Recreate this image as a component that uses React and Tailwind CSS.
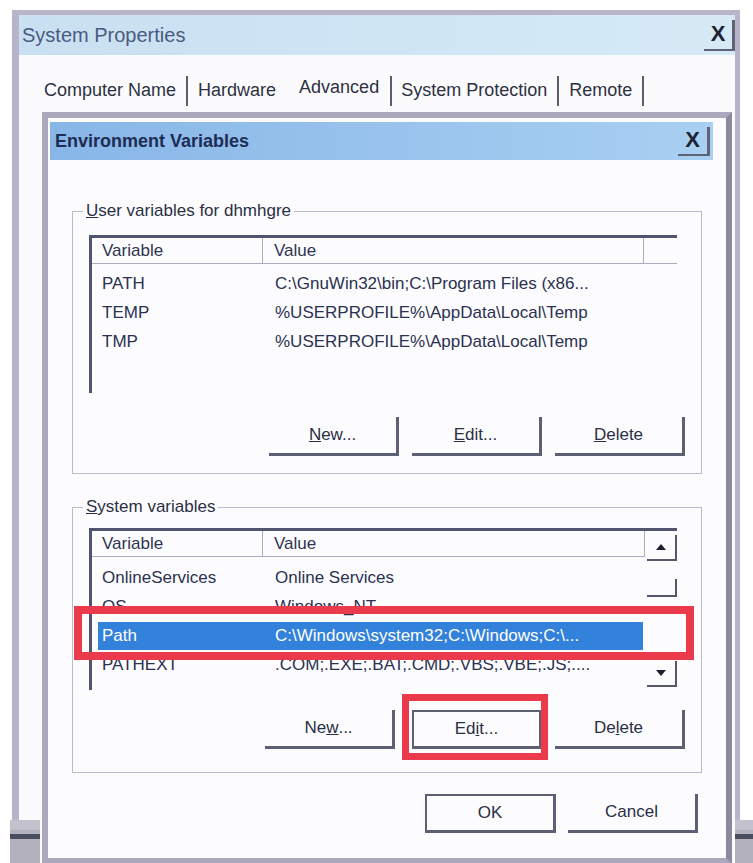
import React from 'react';

const userVars = [
  { name: 'PATH', value: 'C:\\GnuWin32\\bin;C:\\Program Files (x86...' },
  { name: 'TEMP', value: '%USERPROFILE%\\AppData\\Local\\Temp' },
  { name: 'TMP', value: '%USERPROFILE%\\AppData\\Local\\Temp' },
];

const systemVars = [
  { name: 'OnlineServices', value: 'Online Services' },
  { name: 'OS', value: 'Windows_NT' },
  { name: 'Path', value: 'C:\\Windows\\system32;C:\\Windows;C:\\...', selected: true },
  { name: 'PATHEXT', value: '.COM;.EXE;.BAT;.CMD;.VBS;.VBE;.JS;....' },
];

function CloseBox({ className = '' }) {
  return (
    <div
      className={`flex items-center justify-center border-r-[3px] border-b-[2px] border-[#5f6275] text-[22px] font-bold leading-none text-[#1f2233] ${className}`}
    >
      X
    </div>
  );
}

function Sep() {
  return <div className="h-[30px] w-[2px] bg-[#5a5d6c]" />;
}

function Btn({ children, outlined = false, className = '' }) {
  return (
    <div
      className={`flex h-[39px] w-[130px] items-center justify-center border-r-[3px] border-b-[3px] border-[#5d6074] text-[17px] text-[#2a2f45] ${
        outlined ? 'border-l-[2px] border-t-[2px]' : ''
      } ${className}`}
    >
      {children}
    </div>
  );
}

function Header() {
  return (
    <div className="flex h-[26px] items-center border-b border-[#a9acbc] text-[17px] text-[#2f3550]">
      <div className="w-[171px] border-r border-[#a9acbc] pl-[10px] leading-[26px]">Variable</div>
      <div className="flex-1 pl-[11px] leading-[26px]">Value</div>
    </div>
  );
}

function Row({ v }) {
  return (
    <div className="flex h-[29px] items-center text-[17px]">
      <div
        className={`ml-[6px] mr-[2px] flex h-[28px] flex-1 items-center ${
          v.selected ? 'bg-[#3281db] text-white' : 'text-[#2b3150]'
        }`}
      >
        <div className="w-[165px] pl-[4px]">{v.name}</div>
        <div className="pl-[12px] whitespace-nowrap">{v.value}</div>
      </div>
    </div>
  );
}

function ScrollArrow({ up }) {
  return (
    <div className="flex h-[26px] w-[30px] items-center justify-center border-r-[2px] border-b-[2px] border-[#55586b]">
      <svg width="12" height="8" viewBox="0 0 12 8">
        {up ? <path d="M1 7 L6 1 L11 7 Z" fill="#1d2030" /> : <path d="M1 1 L6 7 L11 1 Z" fill="#1d2030" />}
      </svg>
    </div>
  );
}

export default function App() {
  return (
    <div className="relative h-[863px] w-[753px] overflow-hidden bg-white font-['Liberation_Sans',Arial,sans-serif]">
      {/* System Properties window */}
      <div className="ml-[12px] mt-[10px] h-[880px] w-[728px] border-l-[7px] border-r-[5px] border-t-[5px] border-[#b8b4ca] bg-[#fbfbfd]">
        <div className="flex h-[40px] items-center justify-between bg-gradient-to-r from-[#c9e0f2] to-[#d6eaf6] pl-[3px]">
          <span className="text-[20px] text-[#4b5a80]">System Properties</span>
          <CloseBox className="h-[31px] w-[31px]" />
        </div>

        <div className="flex h-[57px] items-center pl-[25px] pt-[14px] text-[18px] text-[#2d3142]">
          <span>Computer Name</span>
          <div className="ml-[10px]"><Sep /></div>
          <span className="ml-[10px]">Hardware</span>
          <span className="mb-[6px] ml-[23px]">Advanced</span>
          <div className="ml-[11px]"><Sep /></div>
          <span className="ml-[9px]">System Protection</span>
          <div className="ml-[10px]"><Sep /></div>
          <span className="ml-[10px]">Remote</span>
          <div className="ml-[10px]"><Sep /></div>
        </div>

        {/* Environment Variables dialog */}
        <div className="ml-[23px] h-[752px] w-[690px] border-[6px] border-[#aba8bc] border-r-[#8c899e] bg-[#fcfcfe]">
          <div className="ml-[2px] mr-[13px] mt-[4px] flex h-[38px] items-center justify-between bg-gradient-to-r from-[#88b6e7] to-[#a9d0f2] pl-[5px] pr-[3px]">
            <span className="text-[18px] font-bold text-[#1d2d55]">Environment Variables</span>
            <CloseBox className="h-[29px] w-[32px]" />
          </div>

          {/* user variables */}
          <fieldset className="mx-[24px] mt-[40px] h-[274px] border border-[#b9bccb]">
            <legend className="ml-[10px] px-[3px] text-[17px] leading-[22px] text-[#2a2f45]">
              <span className="underline">U</span>ser variables for dhmhgre
            </legend>
            <div className="ml-[16px] mt-[13px] h-[158px] w-[588px] border-l-[3px] border-t-[3px] border-[#50546e]">
              <div className="flex">
                <div className="w-[551px]">
                  <Header />
                </div>
                <div className="h-[26px] flex-1 border-b border-l border-[#a9acbc]" />
              </div>
              <div className="mt-[5px]">
                {userVars.map((v) => (
                  <Row key={v.name} v={v} />
                ))}
              </div>
            </div>
            <div className="mt-[24px] flex justify-end gap-[13px] pr-[16px]">
              <Btn><span className="underline">N</span>ew...</Btn>
              <Btn><span className="underline">E</span>dit...</Btn>
              <Btn><span className="underline">D</span>elete</Btn>
            </div>
          </fieldset>

          {/* system variables */}
          <fieldset className="relative mx-[24px] mt-[22px] h-[277px] border border-[#b9bccb]">
            <legend className="ml-[10px] px-[3px] text-[17px] leading-[22px] text-[#2a2f45]">
              <span className="underline">S</span>ystem variables
            </legend>
            <div className="ml-[16px] mt-[10px] flex h-[162px] w-[588px] overflow-hidden border-l-[3px] border-t-[3px] border-[#50546e]">
              <div className="w-[553px]">
                <div className="border-r border-[#a9acbc]">
                  <Header />
                </div>
                <div className="mt-[6px]">
                  {systemVars.map((v) => (
                    <Row key={v.name} v={v} />
                  ))}
                </div>
              </div>
              <div className="flex flex-1 flex-col items-end pt-[4px]">
                <ScrollArrow up />
                <div className="mt-[18px] h-[18px] w-[30px] border-r-[2px] border-b-[2px] border-[#55586b]" />
                <div className="flex-1" />
                <ScrollArrow />
                <div className="h-[3px]" />
              </div>
            </div>
            <div className="mt-[20px] flex justify-end gap-[13px] pr-[16px]">
              <Btn>Ne<span className="underline">w</span>...</Btn>
              <Btn outlined className="ml-[4px] w-[124px]">Ed<span className="underline">i</span>t...</Btn>
              <Btn>De<span className="underline">l</span>ete</Btn>
            </div>

            {/* highlight marks */}
            <div className="absolute left-[1px] top-[88px] h-[54px] w-[620px] border-[8px] border-[#ea3a4c]" />
            <div className="absolute left-[329px] top-[176px] h-[66px] w-[146px] border-[7px] border-[#ea3a4c]" />
          </fieldset>

          <div className="mt-[21px] flex justify-end gap-[12px] pr-[28px]">
            <Btn outlined className="w-[131px]">OK</Btn>
            <Btn className="w-[129px]">Cancel</Btn>
          </div>
        </div>
      </div>

      {/* bits of the window behind */}
      <div className="absolute left-[10px] top-[820px] h-[43px] w-[30px] border-t-[10px] border-[#c3c1cc] bg-[#b3b1be]">
        <div className="mt-[4px] h-[5px] bg-[#4b4e5e]" />
      </div>
      <div className="absolute left-[735px] top-[820px] h-[43px] w-[18px] border-t-[10px] border-[#c3c1cc] bg-[#b3b1be]">
        <div className="mt-[4px] h-[5px] bg-[#4b4e5e]" />
      </div>
    </div>
  );
}
